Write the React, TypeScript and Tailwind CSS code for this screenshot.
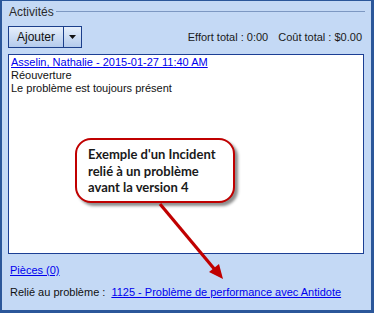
const FONT = { fontFamily: '"Liberation Sans", Arial, sans-serif' };

function Callout() {
  return (
    <div className="absolute left-[73px] top-[137px] w-[160px] h-[65px] rounded-[16px] border-2 border-[#c00000] bg-white shadow-[3px_3px_3px_rgba(0,0,0,0.45)] pl-[11px] pt-[6px]">
      <p
        className="text-[13px] leading-[16.5px] font-bold text-[#1a1a1a] whitespace-nowrap"
        style={{ fontFamily: "Lato, 'Open Sans', sans-serif" }}
      >
        Exemple d'un Incident
        <br />
        relié à un problème
        <br />
        avant la version 4
      </p>
    </div>
  );
}

function Arrow() {
  return (
    <svg className="absolute left-0 top-0 pointer-events-none" width="374" height="313">
      <line x1="158" y1="203" x2="214" y2="270" stroke="#c00000" strokeWidth="3.2" />
      <polygon points="221,278 207,271 217,263" fill="#c00000" />
    </svg>
  );
}

export default function App() {
  return (
    <div
      className="relative w-[374px] h-[313px] bg-[#c4d9f5] border-t border-l-2 border-r-[3px] border-b-[3px] border-[#2b579a] text-[11px] text-[#111] whitespace-nowrap"
      style={FONT}
    >
      {/* group header */}
      <div className="flex items-center h-[20px] pl-[7px] pr-[6px] pt-[1px]">
        <span className="text-[#2a2a2a] text-[12px]">Activités</span>
        <div className="flex-1 h-px bg-[#7d98c2] ml-[2px]" />
      </div>

      {/* toolbar */}
      <div className="flex items-center justify-between pl-[6px] pr-[9px] mt-[5px] h-[22px]">
        <div className="flex h-[22px] border border-[#1b3f8b] bg-gradient-to-b from-[#e6effb] to-[#b4cbec]">
          <div className="w-[55px] flex items-center justify-center text-[12px] text-[#111] border-r border-[#1b3f8b]">
            Ajouter
          </div>
          <div className="w-[17px] flex items-center justify-center">
            <svg width="7" height="4" viewBox="0 0 7 4">
              <polygon points="0,0 7,0 3.5,4" fill="#111" />
            </svg>
          </div>
        </div>
        <div className="flex gap-[10px] text-[#1a1a1a] pt-[1px]">
          <span>Effort total : 0:00</span>
          <span>Coût total : $0.00</span>
        </div>
      </div>

      {/* notes box */}
      <div className="ml-[6px] mr-[7px] mt-[6px] h-[200px] bg-white border border-[#1c3f94] pl-[2px] pt-px leading-[13px]">
        <a className="text-[#0000ee] underline underline-offset-[1px]">
          Asselin, Nathalie - 2015-01-27 11:40 AM
        </a>
        <p>Réouverture</p>
        <p>Le problème est toujours présent</p>
      </div>

      {/* footer links */}
      <div className="pl-[8px] mt-[9px] leading-[14px]">
        <a className="text-[#0000ee] underline">Pièces (0)</a>
      </div>
      <div className="pl-[8px] mt-[8px] flex gap-[6px] leading-[14px]">
        <span>Relié au problème :</span>
        <a className="text-[#0000ee] underline">1125 - Problème de performance avec Antidote</a>
      </div>

      <Callout />
      <Arrow />
    </div>
  );
}
